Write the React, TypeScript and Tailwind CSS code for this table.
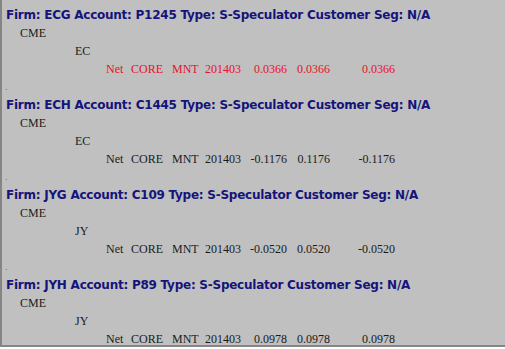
type Row = {
  firm: string;
  account: string;
  exchange: string;
  product: string;
  values: [string, string, string];
  highlight?: boolean;
};

const rows: Row[] = [
  { firm: "ECG", account: "P1245", exchange: "CME", product: "EC", values: ["0.0366", "0.0366", "0.0366"], highlight: true },
  { firm: "ECH", account: "C1445", exchange: "CME", product: "EC", values: ["-0.1176", "0.1176", "-0.1176"] },
  { firm: "JYG", account: "C109", exchange: "CME", product: "JY", values: ["-0.0520", "0.0520", "-0.0520"] },
  { firm: "JYH", account: "P89", exchange: "CME", product: "JY", values: ["0.0978", "0.0978", "0.0978"] },
];

const serif = "font-['Liberation_Serif','Times_New_Roman',serif] text-[12px]";

const Block = ({ row, last }: { row: Row; last: boolean }) => (
  <div className="flex flex-col">
    {/* HEADER */}
    <div className="h-[18px] flex items-center pl-[4px] font-['DejaVu_Sans',Verdana,sans-serif] font-bold text-[12px] tracking-[-0.25px] text-[#14147a] whitespace-nowrap">
      Firm: {row.firm} Account: {row.account} Type: S-Speculator Customer Seg: N/A
    </div>
    <div className={`h-[18px] flex items-center pl-[18px] ${serif} text-[#1a1a1a]`}>{row.exchange}</div>
    <div className={`h-[18px] flex items-center pl-[73px] ${serif} text-[#1a1a1a]`}>{row.product}</div>
    {/* DATA ROW */}
    <div
      className={`h-[18px] flex items-center pl-[104px] ${serif} whitespace-nowrap ${
        row.highlight ? "text-[#e8102a]" : "text-[#1a1a1a]"
      }`}
    >
      <span className="w-[25px]">Net</span>
      <span className="w-[41px]">CORE</span>
      <span className="w-[33px]">MNT</span>
      <span className="w-[38px]">201403</span>
      <span className="w-[44px] text-right">{row.values[0]}</span>
      <span className="w-[43px] text-right">{row.values[1]}</span>
      <span className="w-[65px] text-right">{row.values[2]}</span>
    </div>
    {!last && (
      <div className="h-[18px] flex items-center pl-[3px] text-[9px] leading-none text-[#666] font-['Liberation_Sans',sans-serif]">
        .
      </div>
    )}
  </div>
);

export default function App() {
  return (
    <div className="w-[505px] h-[349px] bg-white overflow-hidden">
      <div className="h-[347px] bg-[#c0c0c0] border-l-2 border-b-2 border-[#858585] pt-[6px] flex flex-col">
        {rows.map((row, i) => (
          <Block key={row.firm} row={row} last={i === rows.length - 1} />
        ))}
      </div>
    </div>
  );
}
